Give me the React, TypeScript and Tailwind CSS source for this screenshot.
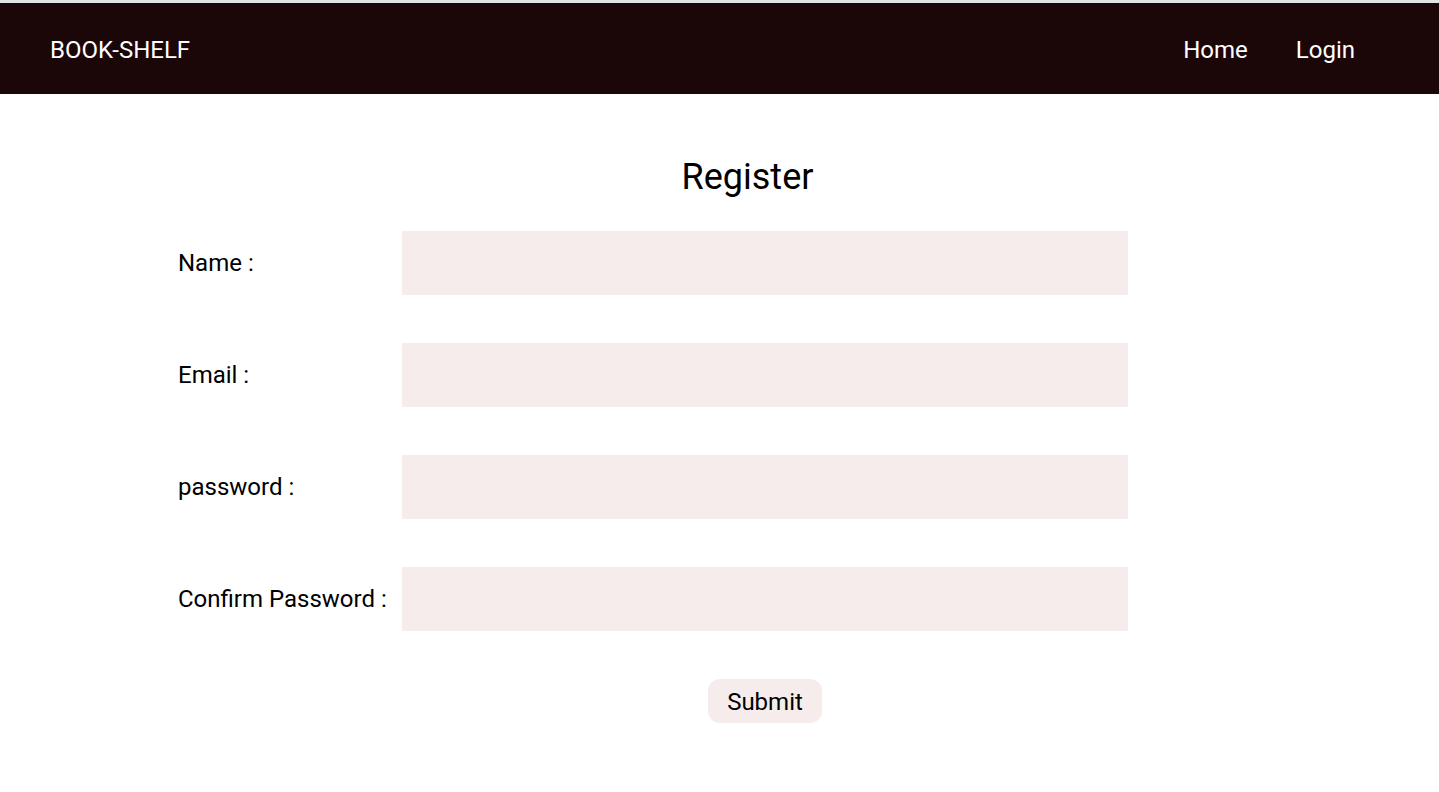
const fields = ['Name :', 'Email :', 'password :', 'Confirm Password :']

export default function App() {
  return (
    <div className="min-h-screen bg-white" style={{ fontFamily: "Roboto, 'Liberation Sans', sans-serif" }}>
      <div className="h-[3px] bg-[#e3e3e3]" />
      <nav className="h-[91px] bg-[#1c0708] flex items-center justify-between pl-[50px] pr-[84px] pt-[2px] text-white text-[24px]">
        <span>BOOK-SHELF</span>
        <div className="flex gap-[48px]">
          <a>Home</a>
          <a>Login</a>
        </div>
      </nav>
      <main className="pt-[60px]">
        <h1 className="text-[36px] text-center pl-[56px] leading-[46px] text-black">Register</h1>
        <form className="mt-[31px] ml-[178px] w-[950px] flex flex-col gap-[48px]">
          {fields.map((f) => (
            <div key={f} className="flex items-center">
              <label className="w-[224px] text-[24px] text-black">{f}</label>
              <input className="w-[726px] h-[64px] bg-[#f5eceb] outline-none" />
            </div>
          ))}
          <div className="pl-[224px] flex justify-center">
            <button type="button" className="bg-[#f5eceb] rounded-[12px] h-[44px] w-[114px] pt-[2px] text-[24px] text-black">
              Submit
            </button>
          </div>
        </form>
      </main>
    </div>
  )
}
